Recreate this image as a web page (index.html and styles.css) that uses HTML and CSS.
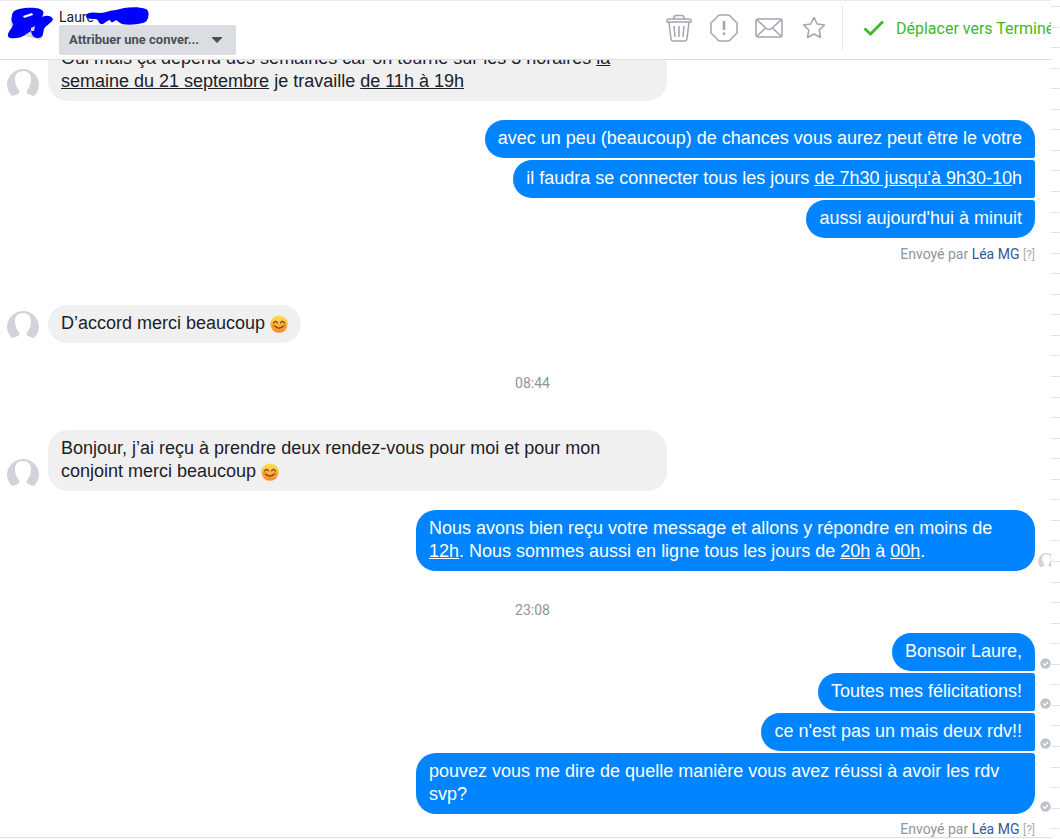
FILE: index.html
```html
<!DOCTYPE html>
<html lang="fr">
<head>
<meta charset="utf-8">
<title>Conversation</title>
<link rel="stylesheet" href="styles.css">
</head>
<body>
<svg class="defs" aria-hidden="true">
  <symbol id="person" viewBox="0 0 32 28">
    <path d="M5 27C2 24 0 20 0 16A16 16 0 0 1 32 16C32 20 30 24 27 27C25 26 22 26 20 24C19 22 20 21 21 20C23 17 24 14 24 10C24 5 21 2 16 2S8 5 8 10C8 14 9 17 11 20C12 21 13 22 12 24C10 26 7 26 5 27Z" fill="#d0d4d9"/>
  </symbol>
  <symbol id="sent" viewBox="0 0 12 12">
    <circle cx="6" cy="6" r="5.6" fill="#bec2c9"/>
    <path d="M3.3 6.1L5.3 8L8.7 4.3" fill="none" stroke="#fff" stroke-width="1.5"/>
  </symbol>
  <symbol id="smile" viewBox="0 0 18 18">
    <linearGradient id="glow" x1="0" y1="0" x2="0" y2="1"><stop offset="0" stop-color="#ffe05a"/><stop offset=".5" stop-color="#fbbb3c"/><stop offset="1" stop-color="#f7842c"/></linearGradient>
    <circle cx="9" cy="9" r="8.7" fill="url(#glow)"/>
    <circle cx="3.8" cy="10.5" r="2.2" fill="#ff7d35" opacity=".6"/><circle cx="14.2" cy="10.5" r="2.2" fill="#ff7d35" opacity=".6"/>
    <path d="M3.6 7.8Q5.6 5 7.4 7.8M10.6 7.8Q12.4 5 14.4 7.8M5 11.2Q9 15 13 11.2" fill="none" stroke="#6b4420" stroke-width="1.3" stroke-linecap="round"/>
  </symbol>
</svg>
<div class="app">
  <div class="panel">
    <header class="header">
      <svg class="photo" viewBox="4 7 48 36" role="img" aria-label="Photo de profil"><path d="M10 24L14 33L40 40L43 36L40 20L14 16Z" fill="#d5d8dd"/><path fill-rule="evenodd" d="M12 16C12 11 16 9 25 8C33 7 41 8 43 11C44 13 43 15 42 17C46 15 51 15 53 19C52 23 46 25 44 29C43 34 43 38 38 38C34 38 32 36 31 31C27 33 23 38 16 38C11 39 7 38 8 34C9 31 13 27 13 24C11 21 11 18 12 16ZM23 16L32 13L33 15L24 18ZM31 28L35 26L34 31L31 31Z" fill="#00f"/></svg>
      <div class="contact">
        <div class="name"><span>Laure</span><svg class="scribble" viewBox="83 7 64 18" aria-hidden="true"><path d="M84 16C84 12 92 12 98 13C104 13 108 10 114 10L122 8C130 7 138 7 144 9C147 11 147 14 146 18C145 22 142 23 136 24C128 25 121 25 118 23L114 20C112 22 109 24 108 20C105 20 102 25 99 24C96 23 97 20 94 19C88 19 84 19 84 16Z" fill="#00f"/></svg></div>
        <div class="assign">
          <select class="assign-select" aria-label="Attribuer une conversation"><option>Attribuer une conver...</option></select>
          <svg class="caret" viewBox="0 0 12 8" aria-hidden="true"><path d="M1 1H11V2L6 7L1 2Z" fill="#4b4f56"/></svg>
        </div>
      </div>
      <div class="tools">
        <button class="tool" aria-label="Supprimer"><svg viewBox="0 0 28 28"><path d="M2 6.5Q2 5 4 5H24Q26 5 26 6.5V8H2ZM8.5 5Q9 1.500 11 1.500H17Q19 1.500 19.500 5M4 8L6 25Q6.300 27 8 27H20Q21.700 27 22 25L24 8M9 12L10 23M14 12V23M19 12L18 23"/></svg></button>
        <button class="tool" aria-label="Signaler"><svg viewBox="0 0 28 28"><path d="M9 1H19L27 9V19L19 27H9L1 19V9Z"/><path d="M14 7V16M14 18.500V21" stroke-width="2.500"/></svg></button>
        <button class="tool" aria-label="Marquer comme non lu"><svg viewBox="0 0 28 28"><rect x="1" y="5" width="26" height="18" rx="2"/><path d="M2 6L11.500 14.500Q14 16.500 16.500 14.500L26 6M2 22L10.500 14M26 22L17.500 14"/></svg></button>
        <button class="tool" aria-label="Suivre"><svg viewBox="0 0 28 28"><path d="M14 3.500L17.200 10L24.500 11L19.200 16L20.500 23.500L14 20L7.500 23.500L8.800 16L3.500 11L10.800 10Z"/></svg></button>
      </div>
      <button class="done"><svg viewBox="0 0 22 16" aria-hidden="true"><path d="M1.500 8.500L7.500 14L20 1.500" fill="none" stroke="#42b72a" stroke-width="2.800"/></svg><span>Déplacer vers Terminé</span></button>
    </header>
    <main class="thread">
      <div class="row incoming"><svg class="avatar"><use href="#person"/></svg><p class="bubble">Oui mais ça dépend des semaines car on tourne sur les 3 horaires <u>la semaine du 21 septembre</u> je travaille <u>de 11h à 19h</u></p></div>
      <div class="group">
        <div class="row outgoing"><p class="bubble first">avec un peu (beaucoup) de chances vous aurez peut être le votre</p><span class="status"></span></div>
        <div class="row outgoing"><p class="bubble middle">il faudra se connecter tous les jours <u>de 7h30 jusqu'à 9h30-10</u>h</p><span class="status"></span></div>
        <div class="row outgoing"><p class="bubble last">aussi aujourd'hui à minuit</p><span class="status"></span></div>
        <p class="sender">Envoyé par <a href="#lea">Léa MG</a> <span class="help">[?]</span></p>
      </div>
      <div class="row incoming reply"><svg class="avatar"><use href="#person"/></svg><p class="bubble">D’accord merci beaucoup <svg class="emoji" role="img" aria-label="sourire"><use href="#smile"/></svg></p></div>
      <time class="time">08:44</time>
      <div class="row incoming"><svg class="avatar"><use href="#person"/></svg><p class="bubble">Bonjour, j’ai reçu à prendre deux rendez-vous pour moi et pour mon conjoint merci beaucoup <svg class="emoji" role="img" aria-label="sourire"><use href="#smile"/></svg></p></div>
      <div class="group">
        <div class="row outgoing"><p class="bubble">Nous avons bien reçu votre message et allons y répondre en moins de <u>12h</u>. Nous sommes aussi en ligne tous les jours de <u>20h</u> à <u>00h</u>.</p><span class="status"><svg class="seen"><use href="#person"/></svg></span></div>
      </div>
      <time class="time evening">23:08</time>
      <div class="group latest">
        <div class="row outgoing"><p class="bubble first">Bonsoir Laure,</p><span class="status"><svg class="check"><use href="#sent"/></svg></span></div>
        <div class="row outgoing"><p class="bubble middle">Toutes mes félicitations!</p><span class="status"><svg class="check"><use href="#sent"/></svg></span></div>
        <div class="row outgoing"><p class="bubble middle">ce n'est pas un mais deux rdv!!</p><span class="status"><svg class="check"><use href="#sent"/></svg></span></div>
        <div class="row outgoing"><p class="bubble last">pouvez vous me dire de quelle manière vous avez réussi à avoir les rdv svp?</p><span class="status"><svg class="check"><use href="#sent"/></svg></span></div>
        <p class="sender">Envoyé par <a href="#lea">Léa MG</a> <span class="help">[?]</span></p>
      </div>
    </main>
  </div>
  <div class="ruler"></div>
</div>
</body>
</html>
```
FILE: styles.css
```css
* { box-sizing: border-box; }
body { margin: 0; font-family: "Liberation Sans", Arial, sans-serif; color: #1d2129; background: #fff; }
p { margin: 0; }
button { border: 0; padding: 0; background: none; font: inherit; cursor: pointer; }
.defs { position: absolute; width: 0; height: 0; }
.app { display: flex; height: 100vh; overflow: hidden; }
.panel { flex: 1; min-width: 0; display: flex; flex-direction: column; padding-bottom: 1px; border-top: 1px solid #e9ebee; }
.ruler { width: 9px; background: repeating-linear-gradient(#e2e3e5 0 1px, transparent 1px 2.45%) 0 6px; }

.header { flex: none; display: flex; align-items: center; height: 59px; overflow: hidden; border-bottom: 1px solid #dcdee2; font-family: Roboto, "Liberation Sans", sans-serif; }
.photo { flex: none; width: 48px; height: 36px; margin: 0 7px 10px 4px; overflow: visible; }
.contact { flex: none; width: 177px; padding-top: 6px; align-self: flex-start; }
.name { display: flex; height: 18px; font-size: 14px; line-height: 20px; white-space: nowrap; }
.scribble { flex: none; width: 64px; height: 18px; margin-left: -9px; }
.assign { position: relative; }
.assign-select { appearance: none; width: 100%; height: 30px; padding: 0 30px 2px 10px; border: 0; border-radius: 2px; background: #dadde1; color: #4b4f56; font: bold 13px Roboto, "Liberation Sans", sans-serif; }
.caret { position: absolute; right: 13px; top: 11px; width: 12px; height: 8px; }
.tools { display: flex; gap: 17px; margin-left: auto; padding: 0 14px 5px 0; }
.tool { width: 28px; height: 28px; }
.tool svg { display: block; width: 28px; height: 28px; fill: none; stroke: #a0a5ae; stroke-width: 1.5; stroke-linejoin: round; }
.done { flex: none; display: flex; align-items: center; gap: 11px; width: 209px; height: 44px; margin-bottom: 4px; padding-left: 20px; border-left: 1px solid #e5e6e9; color: #42b72a; font-size: 16px; white-space: nowrap; }
.done svg { flex: none; width: 22px; height: 16px; }

.thread { flex: 1; min-height: 0; display: flex; flex-direction: column; justify-content: flex-end; overflow: hidden; border-bottom: 1px solid #dcdee2; }
.row { flex: none; display: flex; align-items: flex-end; }
.incoming { padding-left: 7px; gap: 9px; }
.outgoing { justify-content: flex-end; }
.bubble { max-width: 619px; padding: 7px 13px 8px; border-radius: 20px; font-size: 18px; line-height: 23px; }
.incoming .bubble { background: #f0f0f0; }
.outgoing .bubble { background: #0084ff; color: #fff; }
.outgoing .first { border-bottom-right-radius: 3px; }
.outgoing .middle { border-top-right-radius: 3px; border-bottom-right-radius: 3px; }
.outgoing .last { border-top-right-radius: 3px; }
.avatar { flex: none; width: 32px; height: 28px; margin-bottom: 4px; }
.group { flex: none; display: flex; flex-direction: column; gap: 2px; margin-top: 19px; }
.latest { margin-top: 15px; }
.reply { margin-top: 42px; }
.status { flex: none; display: flex; justify-content: flex-end; width: 16px; overflow: hidden; }
.check { flex: none; width: 11px; height: 11px; margin-bottom: 2px; }
.status:has(.seen) { justify-content: flex-start; padding-left: 3px; }
.seen { flex: none; width: 17px; height: 15px; margin-bottom: 3px; }
.sender { padding: 6px 16px 0 0; text-align: right; font-family: Roboto, "Liberation Sans", sans-serif; font-size: 14px; line-height: 16px; color: #90949c; }
.latest .sender { line-height: 14px; }
.sender a { color: #365899; text-decoration: none; }
.help { font-size: 12px; color: #a9adb3; }
.time { flex: none; margin: 32px 0 39px; padding-left: 14px; text-align: center; font-family: Roboto, "Liberation Sans", sans-serif; font-size: 14px; line-height: 16px; color: #90949c; }
.evening { margin: 31px 0 0; }
.emoji { width: 18px; height: 18px; vertical-align: -4px; }
```
